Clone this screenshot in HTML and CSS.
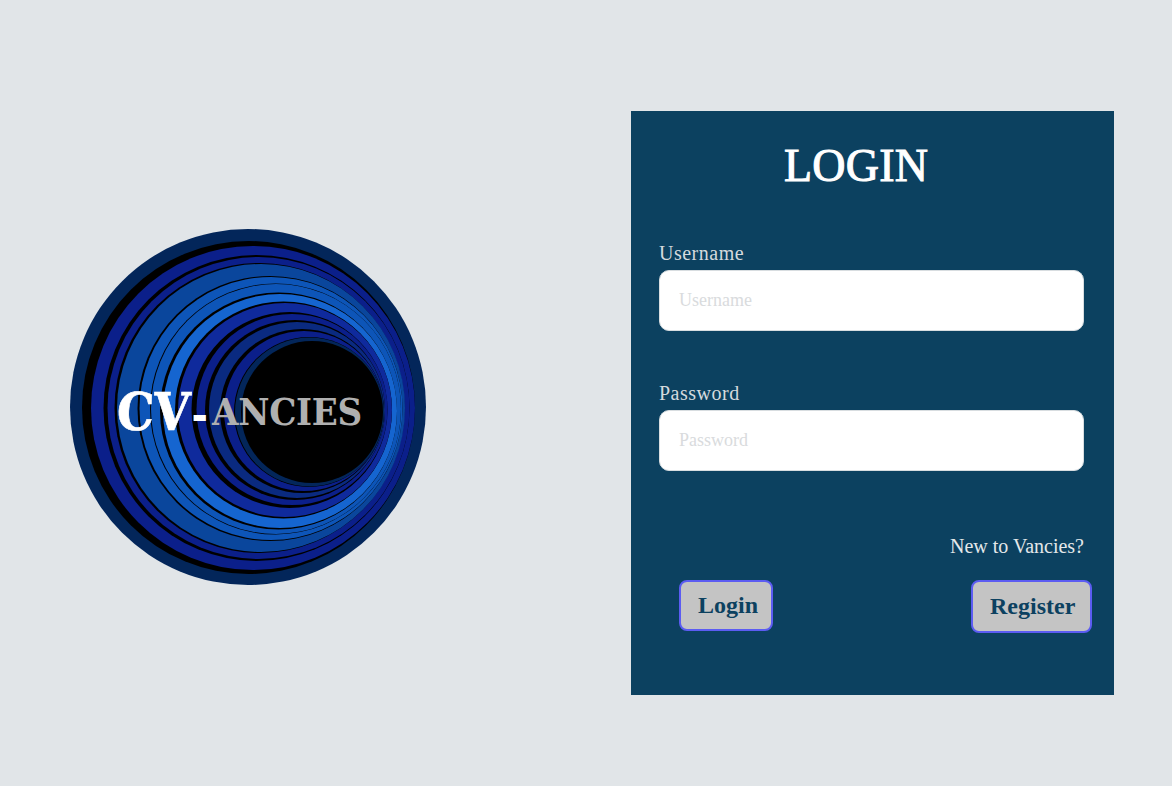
FILE: index.html
```html
<!DOCTYPE html>
<html lang="en">
<head>
    <meta charset="UTF-8">
    <meta name="viewport" content="width=device-width, initial-scale=1.0">
    <title>Login - CV-Vancies</title>
    <link rel="stylesheet" href="styles.css">
</head>
<body>

<div class="page">
    <!-- Left Column: Logo -->
    <div class="logo">
        <svg class="logo-rings" width="360" height="360" viewBox="68 227 360 360">
            <circle cx="248" cy="407" r="178" fill="#03265a"/>
            <circle cx="248.5" cy="407.5" r="166.5" fill="#000"/>
            <circle cx="253" cy="408" r="162" fill="#0b1f8a"/>
            <circle cx="256.5" cy="408" r="153" fill="#000"/>
            <circle cx="258.5" cy="408" r="151" fill="#0b1f8a"/>
            <circle cx="259.5" cy="408" r="145" fill="#000"/>
            <circle cx="261" cy="408" r="144" fill="#0a469c"/>
            <circle cx="270" cy="408.5" r="132.5" fill="#000"/>
            <circle cx="271" cy="408.5" r="131.5" fill="#0d55b8"/>
            <circle cx="275.5" cy="409" r="125.5" fill="#000"/>
            <circle cx="276" cy="409" r="125" fill="#0d55b8"/>
            <circle cx="278.5" cy="411" r="118.5" fill="#000"/>
            <circle cx="280" cy="411" r="117" fill="#1565d0"/>
            <circle cx="283.5" cy="410" r="108.5" fill="#000"/>
            <circle cx="285" cy="410" r="107" fill="#0f2a9c"/>
            <circle cx="289.5" cy="410" r="98" fill="#000"/>
            <circle cx="292" cy="409.5" r="95.5" fill="#0b1f8a"/>
            <circle cx="295" cy="410" r="90" fill="#000"/>
            <circle cx="297" cy="410" r="88" fill="#0a2a80"/>
            <circle cx="302" cy="411" r="82" fill="#000"/>
            <circle cx="304" cy="411" r="80" fill="#0b1f8a"/>
            <circle cx="309" cy="412" r="75" fill="#000"/>
            <circle cx="309.5" cy="412" r="74.5" fill="#03265a"/>
            <circle cx="312" cy="412" r="71" fill="#000"/>
        </svg>
        <div class="logo-text"><span class="logo-cv">CV</span><span class="logo-dash">-</span><span class="logo-rest">ANCIES</span></div>
    </div>

    <!-- Right Column: Login Form -->
    <form class="login-card">
        <h1>LOGIN</h1>
        <div class="field">
            <label for="username">Username</label>
            <input type="text" id="username" placeholder="Username">
        </div>
        <div class="field">
            <label for="password">Password</label>
            <input type="password" id="password" placeholder="Password">
        </div>
        <p class="new-user">New to Vancies?</p>
        <div class="actions">
            <button type="submit" class="btn btn-login">Login</button>
            <button type="button" class="btn btn-register">Register</button>
        </div>
    </form>
</div>

</body>
</html>
```

FILE: styles.css
```css
/* General Reset */
* {
    margin: 0;
    padding: 0;
    box-sizing: border-box;
}
body {
    font-family: 'Liberation Serif', serif;
    background-color: #E1E5E8;
    height: 786px;
    overflow: hidden;
}

.page {
    display: flex;
    justify-content: space-between;
    padding: 111px 58px 0 68px;
}

/* Logo */
.logo {
    position: relative;
    width: 360px;
    height: 360px;
    margin-top: 116px;
}
.logo-rings {
    display: block;
}
.logo-text {
    position: absolute;
    left: 49px;
    top: 152px;
    font-family: 'DejaVu Serif Condensed', 'DejaVu Serif', serif;
    font-weight: bold;
    white-space: nowrap;
    line-height: 66px;
}
.logo-cv {
    display: inline-block;
    color: #fff;
    font-size: 52px;
    letter-spacing: -0.5px;
    -webkit-text-stroke: 0.6px #fff;
    transform: skewX(-3deg);
}
.logo-dash {
    color: #fff;
    font-size: 44px;
    margin-left: 2px;
}
.logo-rest {
    display: inline-block;
    color: #b0b0b0;
    font-size: 38px;
    letter-spacing: -0.3px;
    margin-left: 4px;
    position: relative;
    top: -5px;
}

/* Login Card */
.login-card {
    background-color: #0C4160;
    width: 483px;
    height: 584px;
    padding: 0 28px;
    display: flex;
    flex-direction: column;
}
.login-card h1 {
    color: #fff;
    font-size: 46px;
    font-weight: normal;
    letter-spacing: 0.2px;
    -webkit-text-stroke: 1px #fff;
    line-height: 53px;
    margin-top: 28px;
    margin-left: 125px;
    margin-bottom: 50px;
}
.field {
    margin-bottom: 51px;
}
.field label {
    display: block;
    color: #D5DADE;
    font-size: 20px;
    letter-spacing: 0.5px;
    line-height: 22px;
    margin-bottom: 6px;
}
.field input {
    display: block;
    width: 425px;
    height: 61px;
    padding: 0 19px;
    border: 1px solid #d8dde0;
    border-radius: 10px;
    background: #fff;
    font-family: 'Liberation Serif', serif;
    font-size: 18px;
}
.field input::placeholder {
    color: #D9DBDD;
}
.new-user {
    color: #E4E8EA;
    font-size: 20px;
    line-height: 22px;
    text-align: right;
    width: 425px;
    margin-top: 13px;
}
.actions {
    display: flex;
    justify-content: space-between;
    align-items: flex-start;
    margin-top: 23px;
    padding-left: 20px;
    margin-right: -6px;
}
.btn {
    background-color: #C4C4C4;
    color: #0C4160;
    border: 2px solid #5C5CF2;
    border-radius: 8px;
    font-family: 'Liberation Serif', serif;
    font-weight: bold;
    font-size: 24px;
    text-align: left;
    padding: 0 0 0 17px;
    cursor: pointer;
}
.btn-login {
    width: 94px;
    height: 51px;
}
.btn-register {
    width: 121px;
    height: 53px;
}
```
